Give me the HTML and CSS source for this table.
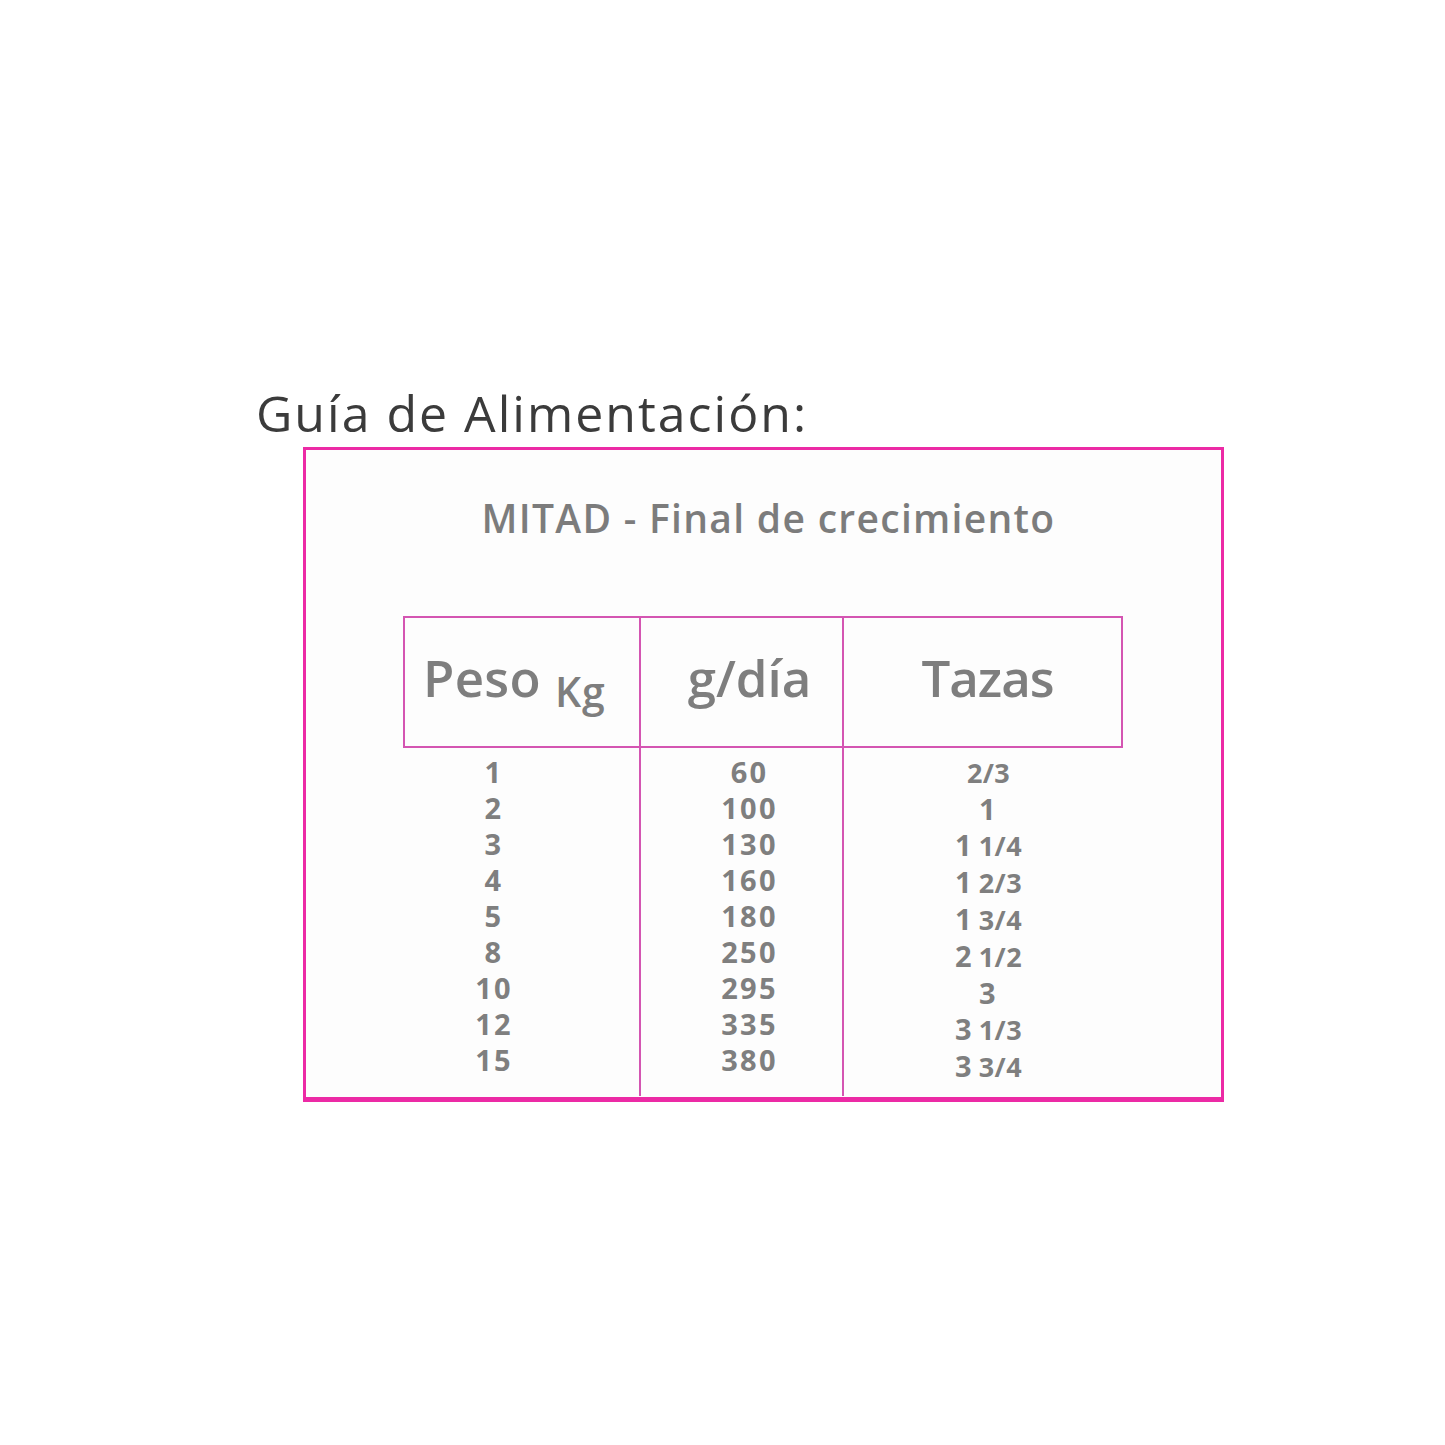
FILE: index.html
```html
<!DOCTYPE html>
<html lang="es">
<head>
<meta charset="utf-8">
<title>Guía de Alimentación</title>
<link rel="stylesheet" href="styles.css">
</head>
<body>
<main class="page">
  <h1 class="title">Guía de Alimentación:</h1>
  <section class="card">
    <h2 class="subtitle">MITAD - Final de crecimiento</h2>
    <div class="table">
      <div class="head c1">Peso <span class="unit">Kg</span></div>
      <div class="head c2">g/día</div>
      <div class="head c3">Tazas</div>
      <div class="col c1">
        <span>1</span><span>2</span><span>3</span><span>4</span><span>5</span><span>8</span><span>10</span><span>12</span><span>15</span>
      </div>
      <div class="col c2">
        <span>60</span><span>100</span><span>130</span><span>160</span><span>180</span><span>250</span><span>295</span><span>335</span><span>380</span>
      </div>
      <div class="col c3">
        <span><small class="frac">2/3</small></span>
        <span>1</span>
        <span>1<small class="frac gap">1/4</small></span>
        <span>1<small class="frac gap">2/3</small></span>
        <span>1<small class="frac gap">3/4</small></span>
        <span>2<small class="frac gap">1/2</small></span>
        <span>3</span>
        <span>3<small class="frac gap">1/3</small></span>
        <span>3<small class="frac gap">3/4</small></span>
      </div>
    </div>
  </section>
</main>
</body>
</html>
```

FILE: styles.css
```css
html, body {
  margin: 0;
  padding: 0;
  background: #ffffff;
}

.page {
  padding: 383px 0 0 256px;
  font-family: "Open Sans", "Liberation Sans", sans-serif;
}

.title {
  margin: 0;
  font-size: 50px;
  line-height: 60px;
  font-weight: 400;
  color: #3b3b3b;
  letter-spacing: 2px;
}

.card {
  margin: 4px 0 0 47px;
  width: 915px;
  border: 3px solid #ec2aa5;
  border-bottom-width: 5px;
  background: #fdfdfd;
  padding: 0 0 1px 0;
}

.subtitle {
  margin: 43px 0 0 0;
  text-align: center;
  font-size: 39px;
  line-height: 50px;
  font-weight: 600;
  color: #7c7c7c;
  padding-left: 10px;
  letter-spacing: 1.3px;
}

.table {
  margin: 73px 0 0 97px;
  display: grid;
  grid-template-columns: 236px 203px 281px;
  width: 720px;
}

.head {
  height: 132px;
  border-top: 2px solid #d455b2;
  border-bottom: 2px solid #d455b2;
  display: flex;
  justify-content: center;
  align-items: center;
  padding-bottom: 10px;
  box-sizing: border-box;
  font-size: 51px;
  font-weight: 600;
  color: #7e7e7e;
}

.head.c1 {
  border-left: 2px solid #d455b2;
  justify-content: flex-start;
  padding-left: 18px;
  letter-spacing: 0.3px;
}

.head.c2, .head.c3 {
  border-left: 2px solid #d455b2;
}

.head.c2 {
  padding-left: 16px;
}

.head.c3 {
  border-right: 2px solid #d455b2;
  letter-spacing: -1px;
  padding-left: 10px;
}

.unit {
  font-size: 41px;
  position: relative;
  top: 14px;
  margin-left: 14px;
  letter-spacing: 1px;
}

.col {
  display: flex;
  flex-direction: column;
  align-items: center;
  padding: 6px 0 11px;
  font-size: 29px;
  line-height: 36px;
  font-weight: 700;
  color: #7f7f7f;
  letter-spacing: 2.2px;
}

.col.c1 {
  padding-right: 54px;
}

.col.c2 {
  padding-left: 16px;
}

.col.c3 {
  padding-left: 10px;
}

.col.c2, .col.c3 {
  border-left: 2px solid #d455b2;
}

.frac {
  display: inline-block;
  font-size: 27px;
  letter-spacing: 0.4px;
}

.frac.gap {
  margin-left: 5px;
}
```
